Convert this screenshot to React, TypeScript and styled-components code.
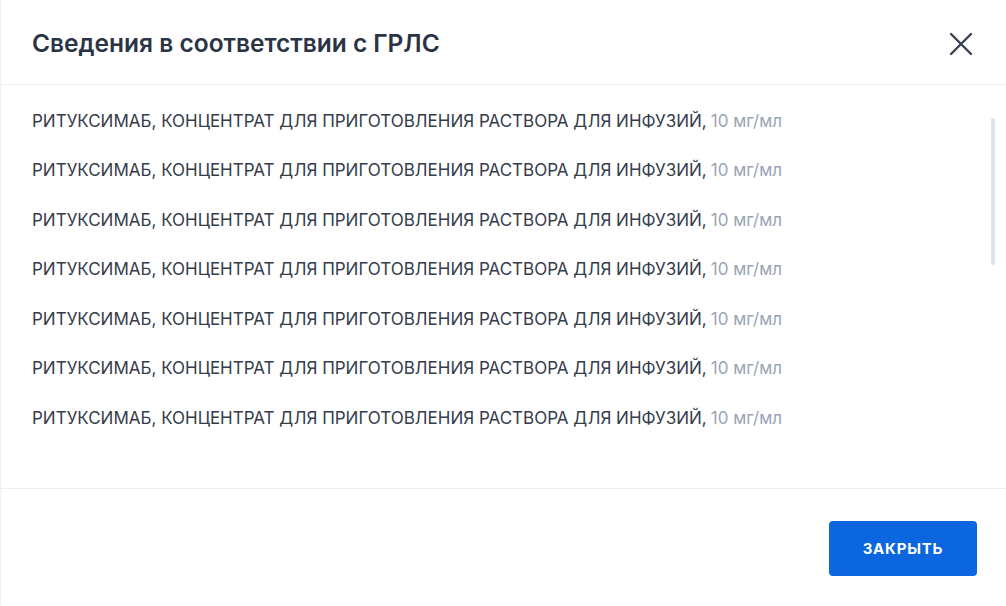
import React from "react";
import styled, { createGlobalStyle } from "styled-components";

/* Global */
const GlobalStyle = createGlobalStyle`
	html, body {
		margin: 0;
		padding: 0;
		background: #ffffff;
	}
	body {
		font-family: Inter, Roboto, "Liberation Sans", sans-serif;
		-webkit-font-smoothing: antialiased;
	}
`;

/* Styles */
const Modal = styled.div`
	display: flex;
	flex-direction: column;
	width: 1006px;
	height: 606px;
	background: #ffffff;
	box-sizing: border-box;
	border-left: 1px solid #f1f2f5;
`;

const Header = styled.div`
	display: flex;
	justify-content: space-between;
	align-items: center;
	height: 84px;
	padding: 0 32px 0 31px;
	border-bottom: 1px solid #eceef3;
	flex-shrink: 0;
`;

const Title = styled.h2`
	margin: 0;
	padding-top: 2px;
	font-size: 24.5px;
	font-weight: 600;
	color: #2b3445;
`;

const CloseButton = styled.button`
	display: flex;
	align-items: center;
	justify-content: center;
	width: 26px;
	height: 26px;
	padding: 0;
	margin-right: 0;
	margin-top: 4px;
	border: none;
	background: transparent;
	cursor: pointer;
`;

const Body = styled.div`
	position: relative;
	flex: 1;
	padding: 11px 31px 0 31px;
	overflow: hidden;
`;

const ItemRow = styled.div`
	display: flex;
	align-items: center;
	height: 49.5px;
	font-size: 17px;
	color: #353c4b;
	white-space: nowrap;
`;

const Unit = styled.span`
	margin-left: 4px;
	color: #9ba4b7;
`;

const ScrollThumb = styled.div`
	position: absolute;
	top: 33px;
	right: 11px;
	width: 4px;
	height: 147px;
	border-radius: 2px;
	background: #dbe3ed;
`;

const Footer = styled.div`
	display: flex;
	justify-content: flex-end;
	align-items: center;
	height: 118px;
	padding: 0 29px;
	border-top: 1px solid #eceef3;
	flex-shrink: 0;
	box-sizing: border-box;
`;

const PrimaryButton = styled.button`
	width: 148px;
	height: 55px;
	margin-top: 2px;
	border: none;
	border-radius: 4px;
	background: #0b66e0;
	color: #ffffff;
	font-family: inherit;
	font-size: 15px;
	font-weight: 700;
	letter-spacing: 0.8px;
	cursor: pointer;
`;

const items = Array.from({ length: 7 }, (_, index) => ({
	id: index,
	name: "РИТУКСИМАБ, КОНЦЕНТРАТ ДЛЯ ПРИГОТОВЛЕНИЯ РАСТВОРА ДЛЯ ИНФУЗИЙ,",
	dose: "10 мг/мл",
}));

export default function App() {
	return (
		<React.Fragment>
			<GlobalStyle />
			<Modal>
				<Header>
					<Title>Сведения в соответствии с ГРЛС</Title>
					<CloseButton aria-label="Закрыть">
						<svg width="24" height="24" viewBox="0 0 24 24">
							<path d="M2 2 L22 22 M22 2 L2 22" stroke="#3a4252" strokeWidth="2.4" strokeLinecap="round" />
						</svg>
					</CloseButton>
				</Header>
				<Body>
					{items.map((item) => (
						<ItemRow key={item.id}>
							{item.name}
							<Unit>{item.dose}</Unit>
						</ItemRow>
					))}
					<ScrollThumb />
				</Body>
				<Footer>
					<PrimaryButton>ЗАКРЫТЬ</PrimaryButton>
				</Footer>
			</Modal>
		</React.Fragment>
	);
}
